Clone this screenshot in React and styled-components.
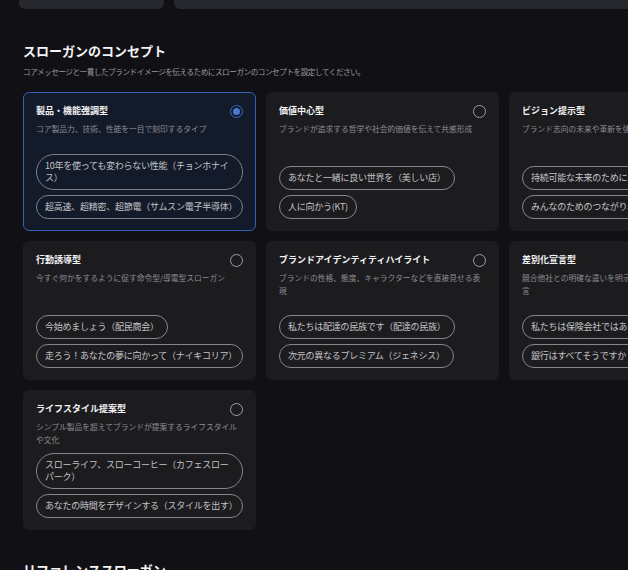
import React from "react";
import styled, { createGlobalStyle } from "styled-components";

const Global = createGlobalStyle`
  html, body {
    margin: 0;
    padding: 0;
    background: #111115;
    overflow: hidden;
  }
  body {
    font-family: "Noto Sans CJK JP", "Noto Sans", sans-serif;
    -webkit-font-smoothing: antialiased;
  }
`;

const Page = styled.div`
  width: 760px;
  min-height: 570px;
  background: #111115;
`;

const TopStrip = styled.div`
  display: flex;
  gap: 10px;
  padding-left: 19px;
`;

const StripBox = styled.div`
  flex: none;
  height: 9px;
  width: ${(p) => p.$w}px;
  background: #27282d;
  border-radius: 0 0 6px 6px;
`;

const Section = styled.section`
  padding: 33px 0 0 23px;
`;

const Title = styled.h2`
  margin: 0;
  font-size: 13px;
  line-height: 18px;
  font-weight: 700;
  color: #f4f4f6;
`;

const Subtitle = styled.p`
  margin: 6px 0 0;
  font-size: 7.6px;
  letter-spacing: -0.45px;
  line-height: 12px;
  color: #9b9ba1;
`;

const Grid = styled.div`
  margin-top: 14px;
  display: grid;
  grid-template-columns: repeat(3, 233px);
  gap: 10px;
`;

const Card = styled.div`
  box-sizing: border-box;
  display: flex;
  flex-direction: column;
  min-height: 139px;
  padding: 11px 12px 11px 12px;
  border-radius: 6px;
  border: 1px solid ${(p) => (p.$selected ? "#3461b8" : "#1c1c1f")};
  background: ${(p) => (p.$selected ? "#131a2a" : "#1c1c1f")};
`;

const CardHeader = styled.div`
  display: flex;
  align-items: center;
  justify-content: space-between;
  height: 14px;
`;

const CardTitle = styled.div`
  font-size: 9px;
  font-weight: 700;
  line-height: 14px;
  color: #f2f2f4;
  white-space: nowrap;
`;

const Radio = styled.span`
  box-sizing: border-box;
  flex: none;
  width: 13px;
  height: 13px;
  border-radius: 50%;
  border: ${(p) => (p.$checked ? "1.5px solid #3a69c6" : "1px solid #9c9ca2")};
  display: flex;
  align-items: center;
  justify-content: center;
  &::after {
    content: "";
    display: ${(p) => (p.$checked ? "block" : "none")};
    width: 7px;
    height: 7px;
    border-radius: 50%;
    background: #4a78cf;
  }
`;

const Desc = styled.p`
  margin: 4px 0 0;
  font-size: 7.75px;
  line-height: 13px;
  color: #8c8c92;
`;

const Pills = styled.div`
  margin-top: auto;
  padding-top: 7px;
  display: flex;
  flex-direction: column;
  align-items: flex-start;
  gap: 5px;
`;

const Pill = styled.span`
  box-sizing: border-box;
  max-width: 100%;
  padding: 5px 8px;
  border: 1px solid ${(p) => (p.$selected ? "#7c818c" : "#86868b")};
  border-radius: 999px;
  font-size: 9px;
  letter-spacing: -0.25px;
  line-height: 12px;
  line-break: loose;
  color: #c4c4c8;
`;

const cards = [
  {
    title: "製品・機能強調型",
    desc: "コア製品力、技術、性能を一目で刻印するタイプ",
    pills: ["10年を使っても変わらない性能（チョンホナイス）", "超高速、超精密、超節電（サムスン電子半導体）"],
    selected: true,
  },
  {
    title: "価値中心型",
    desc: "ブランドが追求する哲学や社会的価値を伝えて共感形成",
    pills: ["あなたと一緒に良い世界を（美しい店）", "人に向かう(KT)"],
  },
  {
    title: "ビジョン提示型",
    desc: "ブランド志向の未来や革新を強調するビジョン提示",
    pills: ["持続可能な未来のために（ヒュンダイ）", "みんなのためのつながり、みんなの（カカオ）"],
  },
  {
    title: "行動誘導型",
    desc: "今すぐ何かをするように促す命令型/導電型スローガン",
    pills: ["今始めましょう（配民商会）", "走ろう！あなたの夢に向かって（ナイキコリア）"],
  },
  {
    title: "ブランドアイデンティティハイライト",
    desc: "ブランドの性格、態度、キャラクターなどを直接見せる表現",
    pills: ["私たちは配達の民族です（配達の民族）", "次元の異なるプレミアム（ジェネシス）"],
  },
  {
    title: "差別化宣言型",
    desc: "競合他社との明確な違いを明示し、独自のポジションを宣言",
    pills: ["私たちは保険会社ではありません", "銀行はすべてそうですか？（カカオバンク）"],
  },
  {
    title: "ライフスタイル提案型",
    desc: "シンプル製品を超えてブランドが提案するライフスタイルや文化",
    pills: ["スローライフ、スローコーヒー（カフェスローパーク）", "あなたの時間をデザインする（スタイルを出す）"],
  },
];

const NextSection = styled.section`
  padding: 31px 0 0 23px;
`;

export default function App() {
  return (
    <Page>
      <Global />
      <TopStrip>
        <StripBox $w={145} />
        <StripBox $w={600} />
      </TopStrip>
      <Section>
        <Title>スローガンのコンセプト</Title>
        <Subtitle>
          コアメッセージと一貫したブランドイメージを伝えるためにスローガンのコンセプトを設定してください。
        </Subtitle>
        <Grid>
          {cards.map((c) => (
            <Card key={c.title} $selected={c.selected}>
              <CardHeader>
                <CardTitle>{c.title}</CardTitle>
                <Radio $checked={c.selected} />
              </CardHeader>
              <Desc>{c.desc}</Desc>
              <Pills>
                {c.pills.map((p) => (
                  <Pill key={p} $selected={c.selected}>
                    {p}
                  </Pill>
                ))}
              </Pills>
            </Card>
          ))}
        </Grid>
      </Section>
      <NextSection>
        <Title>リファレンススローガン</Title>
      </NextSection>
    </Page>
  );
}
